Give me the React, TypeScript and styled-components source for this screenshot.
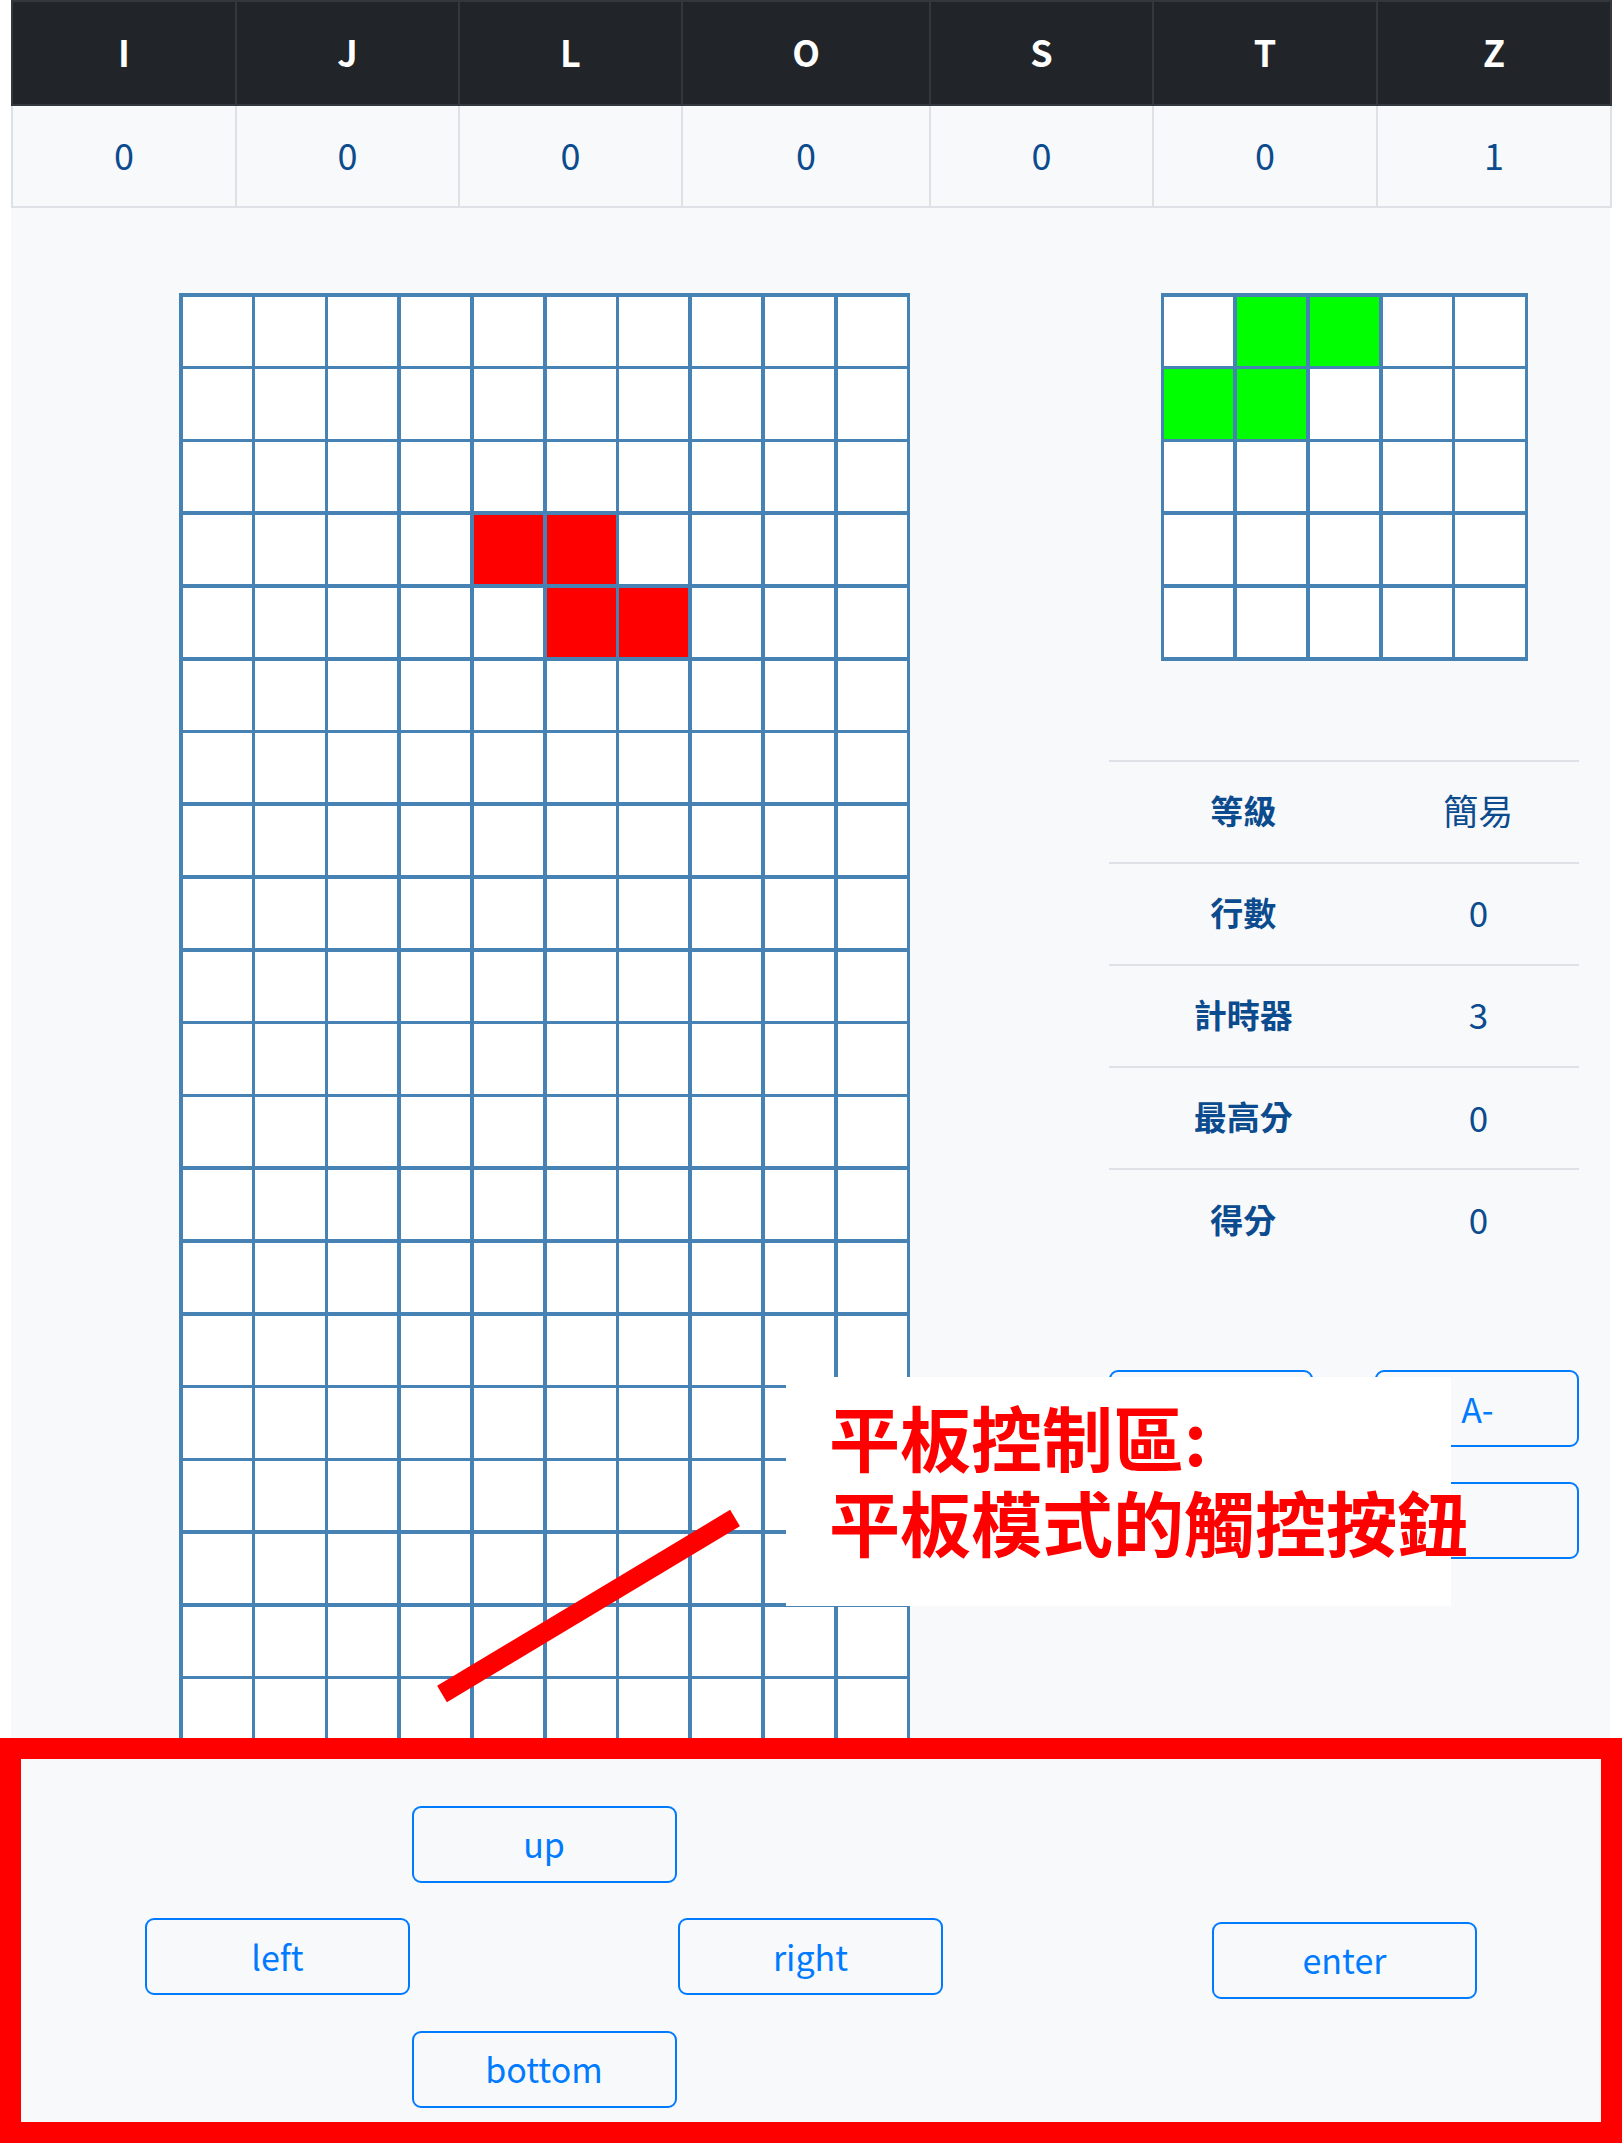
import React from "react";
import styled, { createGlobalStyle } from "styled-components";

const FONT = `"Noto Sans CJK TC", "Noto Sans", sans-serif`;
const NAVY = "#0b4b8e";
const GRID_LINE = "#4682b4";
const PRIMARY = "#007bff";
const LIGHT = "#f8f9fa";

const GlobalStyle = createGlobalStyle`
  html, body {
    margin: 0;
    padding: 0;
    background: #ffffff;
    font-family: ${FONT};
  }
  * { box-sizing: border-box; }
`;

const Page = styled.div`
  position: relative;
  width: 1622px;
  min-height: 2143px;
  overflow: hidden;
`;

const Container = styled.div`
  margin: 0 12px 0 11px;
  background: ${LIGHT};
`;

const PieceTable = styled.table`
  width: 100%;
  border-collapse: collapse;
  table-layout: fixed;
  font-family: ${FONT};
`;

const HeadCell = styled.th`
  background: #212529;
  color: #ffffff;
  border: 2px solid #32383e;
  height: 104px;
  padding: 0 0 5px;
  font-size: 36px;
  font-weight: 700;
  text-align: center;
  vertical-align: middle;
`;

const CountCell = styled.td`
  background: ${LIGHT};
  color: ${NAVY};
  border: 2px solid #dee2e6;
  height: 102px;
  padding: 0 0 4px;
  font-size: 36px;
  text-align: center;
  vertical-align: middle;
`;

const Main = styled.div`
  display: flex;
  align-items: flex-start;
  padding-top: 85px;
`;

const Grid = styled.div<{ $cols: number }>`
  display: grid;
  grid-template-columns: repeat(${(p) => p.$cols}, 69.2px);
  grid-auto-rows: 69.2px;
  gap: 3.6px;
  padding: 3.6px;
  background: ${GRID_LINE};
  width: max-content;
`;

const Board = styled(Grid)`
  margin-left: 168px;
`;

const Cell = styled.div<{ $fill?: string }>`
  background: ${(p) => p.$fill ?? "#ffffff"};
`;

const Side = styled.div`
  width: 470px;
  margin-left: 199px;
  display: flex;
  flex-direction: column;
  align-items: center;
`;

const StatsTable = styled.table`
  width: 100%;
  margin-top: 99px;
  border-collapse: collapse;
  font-family: ${FONT};
  color: ${NAVY};
`;

const StatRow = styled.tr`
  border-top: 2px solid #dee2e6;
  height: 102.2px;
`;

const StatLabel = styled.th`
  width: 57%;
  font-size: 33px;
  font-weight: 600;
  text-align: center;
  padding: 0 0 4px;
`;

const StatValue = styled.td`
  font-size: 35px;
  font-weight: 400;
  text-align: center;
  padding: 0 0 4px;
`;

const ButtonRow = styled.div<{ $gap: number }>`
  width: 100%;
  display: flex;
  justify-content: space-between;
  margin-top: ${(p) => p.$gap}px;
`;

const OutlineButton = styled.button<{ $w: number }>`
  width: ${(p) => p.$w}px;
  height: 77px;
  border: 2px solid ${PRIMARY};
  border-radius: 9px;
  background: transparent;
  color: ${PRIMARY};
  font-family: ${FONT};
  font-size: 34px;
  font-weight: 400;
  line-height: 1;
  padding: 0;
  cursor: pointer;
`;

const ControlFrame = styled.section`
  position: relative;
  z-index: 2;
  margin-top: -14.6px;
  border: 21px solid #ff0000;
  background: ${LIGHT};
  padding: 47px 0 14px 124px;
  display: flex;
  align-items: center;
`;

const DPad = styled.div`
  display: grid;
  grid-template-columns: repeat(3, 265px);
  grid-auto-rows: 77px;
  column-gap: 1.5px;
  row-gap: 35.5px;
`;

const PadSlot = styled.div<{ $col: number; $row: number }>`
  grid-column: ${(p) => p.$col};
  grid-row: ${(p) => p.$row};
  display: flex;
`;

const EnterSlot = styled.div`
  margin-left: 269px;
  margin-top: 7px;
  display: flex;
`;

const Callout = styled.div`
  position: absolute;
  z-index: 3;
  left: 786px;
  top: 1377px;
  width: 665px;
  height: 229px;
  background: #ffffff;
  padding: 16px 0 0 43px;
  color: #ff0000;
  font-family: ${FONT};
  font-size: 71px;
  font-weight: 600;
  line-height: 85px;
  white-space: nowrap;
`;

const Pointer = styled.svg`
  position: absolute;
  z-index: 3;
  left: 0;
  top: 0;
  pointer-events: none;
`;

const PIECES = ["I", "J", "L", "O", "S", "T", "Z"];
const COUNTS = [0, 0, 0, 0, 0, 0, 1];
const COL_WIDTHS = [224, 223, 223, 248, 223, 224, 234];

const boardFilled: Record<string, string> = {
  "3-4": "#ff0000",
  "3-5": "#ff0000",
  "4-5": "#ff0000",
  "4-6": "#ff0000",
};

const nextFilled: Record<string, string> = {
  "0-1": "#00ff00",
  "0-2": "#00ff00",
  "1-0": "#00ff00",
  "1-1": "#00ff00",
};

const STATS: [string, string][] = [
  ["等級", "簡易"],
  ["行數", "0"],
  ["計時器", "3"],
  ["最高分", "0"],
  ["得分", "0"],
];

function renderGrid(rows: number, cols: number, filled: Record<string, string>) {
  const cells: React.ReactNode[] = [];
  for (let r = 0; r < rows; r++) {
    for (let c = 0; c < cols; c++) {
      cells.push(<Cell key={`${r}-${c}`} $fill={filled[`${r}-${c}`]} />);
    }
  }
  return cells;
}

export default function App() {
  return (
    <Page>
      <GlobalStyle />
      <Container>
        <PieceTable>
          <colgroup>
            {COL_WIDTHS.map((w, i) => (
              <col key={i} style={{ width: w }} />
            ))}
          </colgroup>
          <thead>
            <tr>
              {PIECES.map((p) => (
                <HeadCell key={p}>{p}</HeadCell>
              ))}
            </tr>
          </thead>
          <tbody>
            <tr>
              {COUNTS.map((n, i) => (
                <CountCell key={i}>{n}</CountCell>
              ))}
            </tr>
          </tbody>
        </PieceTable>

        <Main>
          <Board $cols={10}>{renderGrid(20, 10, boardFilled)}</Board>
          <Side>
            <Grid $cols={5}>{renderGrid(5, 5, nextFilled)}</Grid>
            <StatsTable>
              <tbody>
                {STATS.map(([label, value]) => (
                  <StatRow key={label}>
                    <StatLabel>{label}</StatLabel>
                    <StatValue>{value}</StatValue>
                  </StatRow>
                ))}
              </tbody>
            </StatsTable>
            <ButtonRow $gap={99}>
              <OutlineButton $w={204}>A+</OutlineButton>
              <OutlineButton $w={204}>A-</OutlineButton>
            </ButtonRow>
            <ButtonRow $gap={35}>
              <OutlineButton $w={204} aria-label="暫停" />
              <OutlineButton $w={204} aria-label="重新開始" />
            </ButtonRow>
          </Side>
        </Main>
      </Container>

      <ControlFrame>
        <DPad>
          <PadSlot $col={2} $row={1}>
            <OutlineButton $w={265}>up</OutlineButton>
          </PadSlot>
          <PadSlot $col={1} $row={2}>
            <OutlineButton $w={265}>left</OutlineButton>
          </PadSlot>
          <PadSlot $col={3} $row={2}>
            <OutlineButton $w={265}>right</OutlineButton>
          </PadSlot>
          <PadSlot $col={2} $row={3}>
            <OutlineButton $w={265}>bottom</OutlineButton>
          </PadSlot>
        </DPad>
        <EnterSlot>
          <OutlineButton $w={265}>enter</OutlineButton>
        </EnterSlot>
      </ControlFrame>

      <Callout>
        平板控制區:
        <br />
        平板模式的觸控按鈕
      </Callout>
      <Pointer width="1622" height="2143" viewBox="0 0 1622 2143">
        <line x1="442" y1="1694" x2="735" y2="1518" stroke="#ff0000" strokeWidth="19" />
      </Pointer>
    </Page>
  );
}
